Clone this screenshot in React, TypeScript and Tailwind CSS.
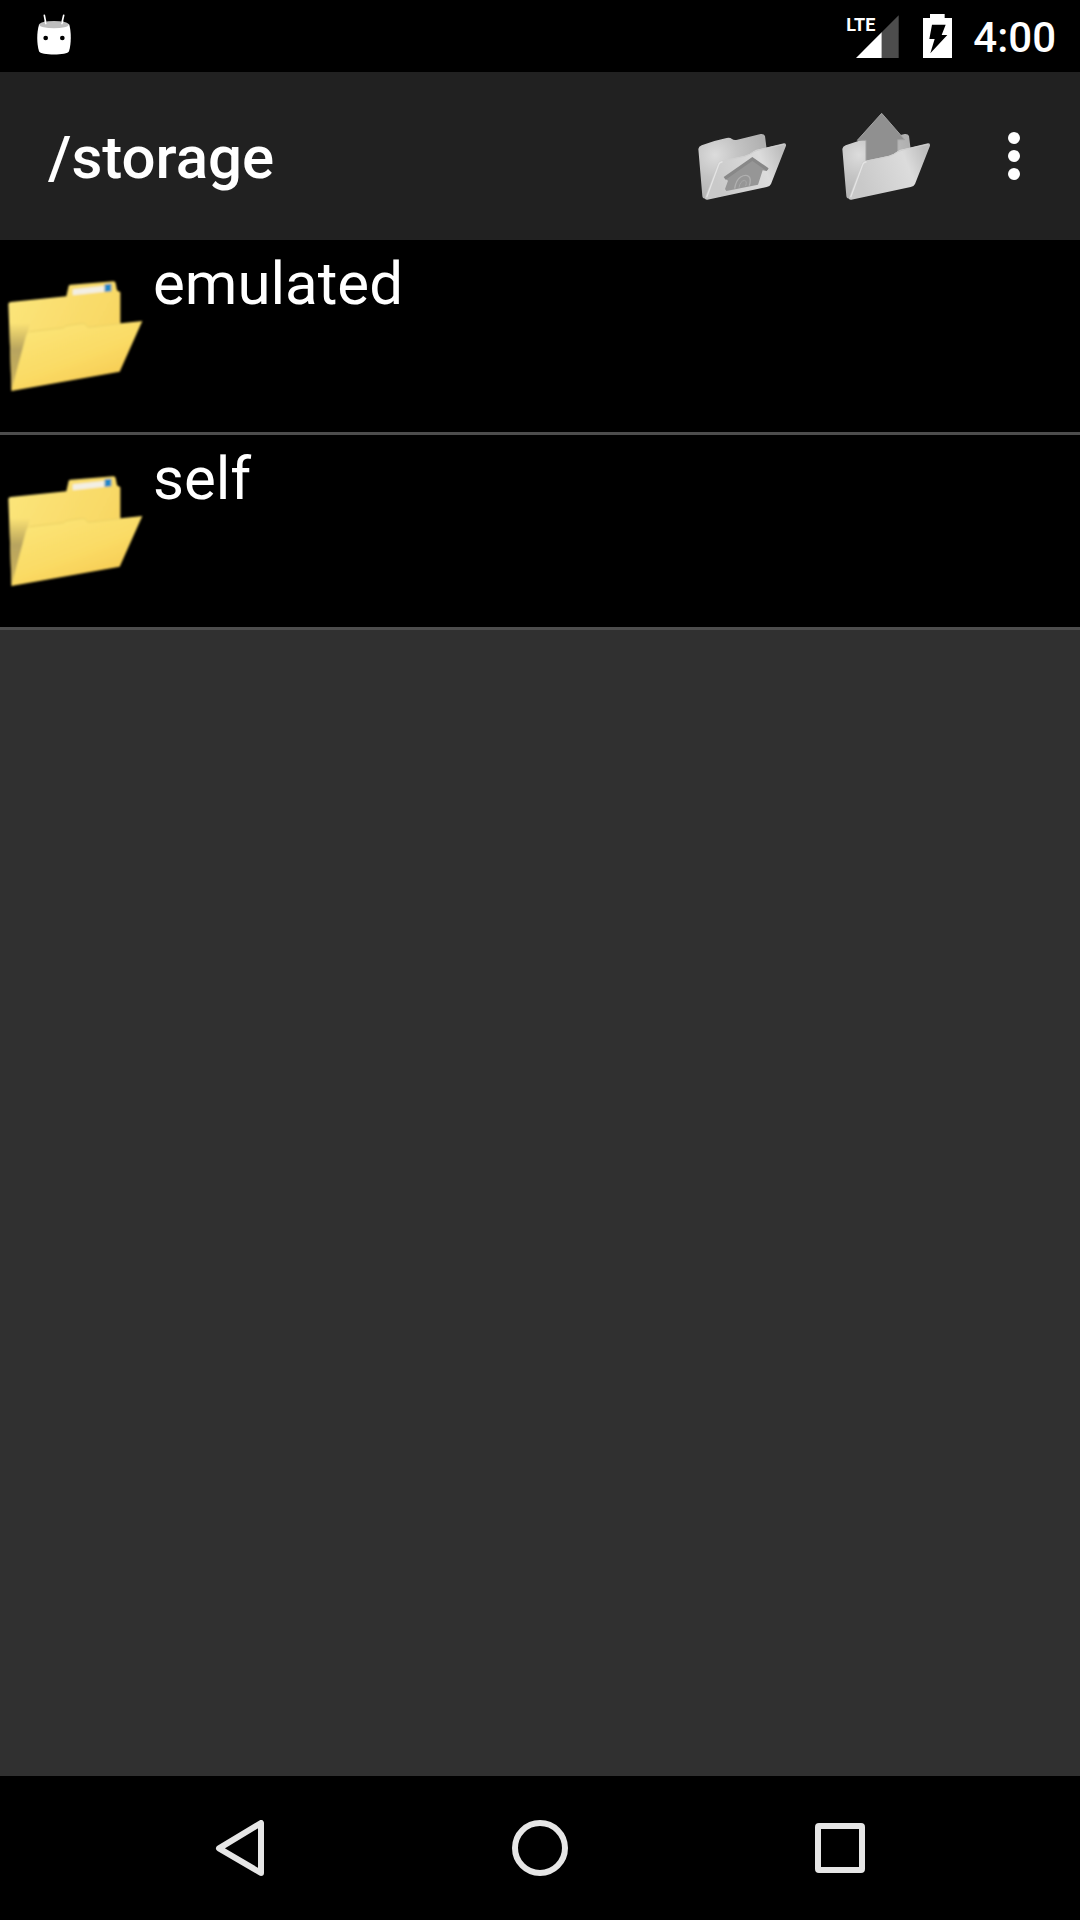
import React from "react";

function MarshmallowIcon() {
  return (
    <svg viewBox="105 30 114 132" className="h-11 w-[38px]" aria-hidden="true">
      <path d="M133 40 L138 66 M191 40 L185 66" stroke="#fff" strokeWidth="5" strokeLinecap="round" />
      <path
        d="M117 68 C120 60 205 60 208 68 C214 90 214 125 207 148 C203 161 121 161 117 148 C110 125 110 90 117 68Z"
        fill="#fff"
      />
      <ellipse cx="162" cy="68" rx="44" ry="11" fill="#bdbdbd" />
      <path d="M135 58 L138 67 M189 58 L185 67" stroke="#fff" strokeWidth="4" />
      <circle cx="137" cy="108" r="7" fill="#000" />
      <circle cx="187" cy="108" r="7" fill="#000" />
    </svg>
  );
}

function SignalIcon() {
  return (
    <svg viewBox="106 42 129 129" className="h-[43px] w-[43px]" aria-hidden="true">
      <path d="M183 94 L234 43 V171 H183Z" fill="#4d4d4d" />
      <path d="M183 94 V171 H106Z" fill="#fff" />
    </svg>
  );
}

function BatteryIcon() {
  return (
    <svg viewBox="309 42 87 132" className="h-11 w-[29px]" aria-hidden="true">
      <path d="M330 42 H374 V54 H396 V174 H309 V54 H330Z" fill="#fff" />
      <path d="M336 74 H377 L365 105 H382 L331 160 L344 117 H328Z" fill="#000" />
    </svg>
  );
}

function GrayFolderBack() {
  return (
    <path
      d="M55 147 Q56 140 65 136 Q100 122 140 114 Q150 112 156 117 Q162 122 172 119 L242 102 Q252 101 255 108 L259 140 L262 200 L76 296 Q68 296 67 288Z"
      fill="url(#grayBack)"
    />
  );
}

function GrayFolderFront() {
  return (
    <>
      <path
        d="M120 183 Q160 175 195 167 Q210 163 222 153 Q228 149 240 147 L312 130 Q319 129 318 137 L273 252 Q270 259 260 261 L82 299 Q72 300 76 290 L112 193 Q115 185 120 183Z"
        fill="url(#grayFront)"
      />
      <path d="M80 292 L116 194 Q118 187 128 185" fill="none" stroke="#e4e4e4" strokeWidth="4" />
      <path d="M128 183 L195 169 Q210 164 222 155 L240 149 L312 133" fill="none" stroke="#cfcfcf" strokeWidth="3" />
    </>
  );
}

function HomeFolderIcon() {
  return (
    <svg viewBox="30 24 288 288" className="h-24 w-24" aria-hidden="true">
      <defs>
        <radialGradient id="grayBack" gradientUnits="userSpaceOnUse" cx="105" cy="165" r="150">
          <stop offset="0" stopColor="#dcdcdc" />
          <stop offset="0.45" stopColor="#c4c4c4" />
          <stop offset="1" stopColor="#b0b0b0" />
        </radialGradient>
        <linearGradient id="grayFront" gradientUnits="userSpaceOnUse" x1="110" y1="250" x2="310" y2="170">
          <stop offset="0" stopColor="#c9c9c9" />
          <stop offset="0.7" stopColor="#dcdcdc" />
          <stop offset="1" stopColor="#bebebe" />
        </linearGradient>
        <filter id="soft" x="-10%" y="-10%" width="120%" height="120%">
          <feGaussianBlur stdDeviation="2.2" />
        </filter>
      </defs>
      <g filter="url(#soft)">
        <GrayFolderBack />
        <GrayFolderFront />
        <path d="M217 173 L265 207 L259 213 L248 211 L234 254 L139 273 L135 267 L144 242 L134 235Z" fill="#969696" />
        <path d="M134 235 L217 177 L263 209" fill="none" stroke="#888888" strokeWidth="10" />
        <path
          d="M164 266 Q168 240 182 231 Q197 222 207 230 Q214 237 208 257"
          fill="none"
          stroke="#b0b0b0"
          strokeWidth="4"
        />
        <path d="M177 263 Q180 244 193 241 Q202 242 197 258" fill="none" stroke="#a8a8a8" strokeWidth="3" />
      </g>
    </svg>
  );
}

function UpFolderIcon() {
  return (
    <svg viewBox="42 24 288 288" className="h-24 w-24" aria-hidden="true">
      <g filter="url(#soft)">
        <g transform="translate(12 0)">
          <GrayFolderBack />
        </g>
        <path d="M185 40 L254 119 H233 V165 L138 190 V121 H112Z" fill="#909090" stroke="#a2a2a2" strokeWidth="3" />
        <g transform="translate(12 0)">
          <GrayFolderFront />
        </g>
      </g>
    </svg>
  );
}

function OverflowIcon() {
  return (
    <svg viewBox="0 0 12 48" className="h-12 w-3" fill="#fff" aria-hidden="true">
      <circle cx="6" cy="6" r="6" />
      <circle cx="6" cy="24" r="6" />
      <circle cx="6" cy="42" r="6" />
    </svg>
  );
}

function FolderIcon() {
  return (
    <svg viewBox="0 72 432 432" className="h-36 w-36 shrink-0" aria-hidden="true">
      <defs>
        <linearGradient id="yellowBack" x1="0" y1="0" x2="1" y2="0.5">
          <stop offset="0" stopColor="#fbe67c" />
          <stop offset="1" stopColor="#f8d661" />
        </linearGradient>
        <linearGradient id="yellowFront" x1="0.1" y1="0" x2="0.8" y2="1">
          <stop offset="0" stopColor="#fbe67a" />
          <stop offset="0.55" stopColor="#fadb65" />
          <stop offset="1" stopColor="#f6c64c" />
        </linearGradient>
        <linearGradient id="fold" x1="0" y1="0" x2="0" y2="1">
          <stop offset="0" stopColor="#b8a258" stopOpacity="0" />
          <stop offset="0.4" stopColor="#b8a45e" />
          <stop offset="1" stopColor="#ccb35c" />
        </linearGradient>
        <filter id="softEdge" x="-10%" y="-10%" width="120%" height="120%">
          <feGaussianBlur stdDeviation="3" />
        </filter>
      </defs>
      <g filter="url(#softEdge)">
        <path
          d="M25 192 Q25 187 32 186 L199 169 L206 138 Q207 134 213 134 L340 124 Q346 124 347 130 L351 151 L361 157 V300 L35 452Z"
          fill="url(#yellowBack)"
        />
        <path d="M28 250 L90 250 L80 290 L38 448 L34 448Z" fill="url(#fold)" />
        <path d="M218 148 L314 137 V155 L218 166Z" fill="#f3efe4" />
        <path d="M314 133 L334 131 V154 L314 156Z" fill="#2288c8" />
        <path
          d="M88 275 L190 263 Q196 257 205 256 L248 250 Q258 250 264 260 L427 243 L359 395 L34 453 L78 288 Q81 277 88 275Z"
          fill="url(#yellowFront)"
        />
        <path d="M88 275 L190 263 Q196 257 205 256 L248 250 Q258 250 264 262 L360 251" fill="none" stroke="#ead063" strokeWidth="3" />
      </g>
    </svg>
  );
}

const entries = ["emulated", "self"];

export default function App() {
  return (
    <div className="flex min-h-screen flex-col bg-[#303030] font-[Roboto,sans-serif] text-white">
      <header>
        <div className="flex h-[72px] items-center justify-between bg-black pr-6 pl-[35px]">
          <div className="pb-1">
            <MarshmallowIcon />
          </div>
          <div className="flex items-center">
            <div className="relative mr-6 pl-[10px]">
              <SignalIcon />
              <span className="absolute top-0 left-0 text-[18px] leading-5 font-bold">LTE</span>
            </div>
            <BatteryIcon />
            <time className="ml-[21px] pt-1 text-[42px] leading-[50px] font-medium">4:00</time>
          </div>
        </div>
        <div className="flex h-[168px] items-center bg-[#212121] pr-[6px] pl-12">
          <h1 className="flex-1 pt-1 text-[60px] leading-[70px] font-medium">/storage</h1>
          <button type="button" aria-label="Home folder" className="flex h-36 w-36 items-center justify-center">
            <HomeFolderIcon />
          </button>
          <button type="button" aria-label="Parent folder" className="flex h-36 w-36 items-center justify-center">
            <UpFolderIcon />
          </button>
          <button type="button" aria-label="More options" className="flex h-36 w-[120px] items-center justify-center">
            <OverflowIcon />
          </button>
        </div>
      </header>
      <main className="flex-1">
        <ul>
          {entries.map((name) => (
            <li key={name} className="border-b-[3px] border-[#4d4d4d] bg-black">
              <button type="button" className="flex h-48 w-full items-center gap-[9px] text-left">
                <FolderIcon />
                <span className="self-start pt-[9px] text-[60px] leading-[70px]">{name}</span>
              </button>
            </li>
          ))}
        </ul>
      </main>
      <nav className="flex h-36 bg-black px-[90px]" aria-label="System navigation">
        <button type="button" aria-label="Back" className="flex flex-1 items-center justify-center">
          <svg viewBox="96 180 168 168" className="h-14 w-14" aria-hidden="true">
            <path d="M243 189 V339 L117 265Z" fill="none" stroke="#e6e6e6" strokeWidth="18" strokeLinejoin="round" />
          </svg>
        </button>
        <button type="button" aria-label="Home" className="flex flex-1 items-center justify-center">
          <svg viewBox="0 0 56 56" className="h-14 w-14" aria-hidden="true">
            <circle cx="28" cy="28" r="25" fill="none" stroke="#e6e6e6" strokeWidth="6" />
          </svg>
        </button>
        <button type="button" aria-label="Recent apps" className="flex flex-1 items-center justify-center">
          <svg viewBox="0 0 50 50" className="h-[50px] w-[50px]" aria-hidden="true">
            <path
              fillRule="evenodd"
              d="M4 0 H46 Q50 0 50 4 V46 Q50 50 46 50 H4 Q0 50 0 46 V4 Q0 0 4 0Z M6 6 V44 H44 V6Z"
              fill="#e6e6e6"
            />
          </svg>
        </button>
      </nav>
    </div>
  );
}
